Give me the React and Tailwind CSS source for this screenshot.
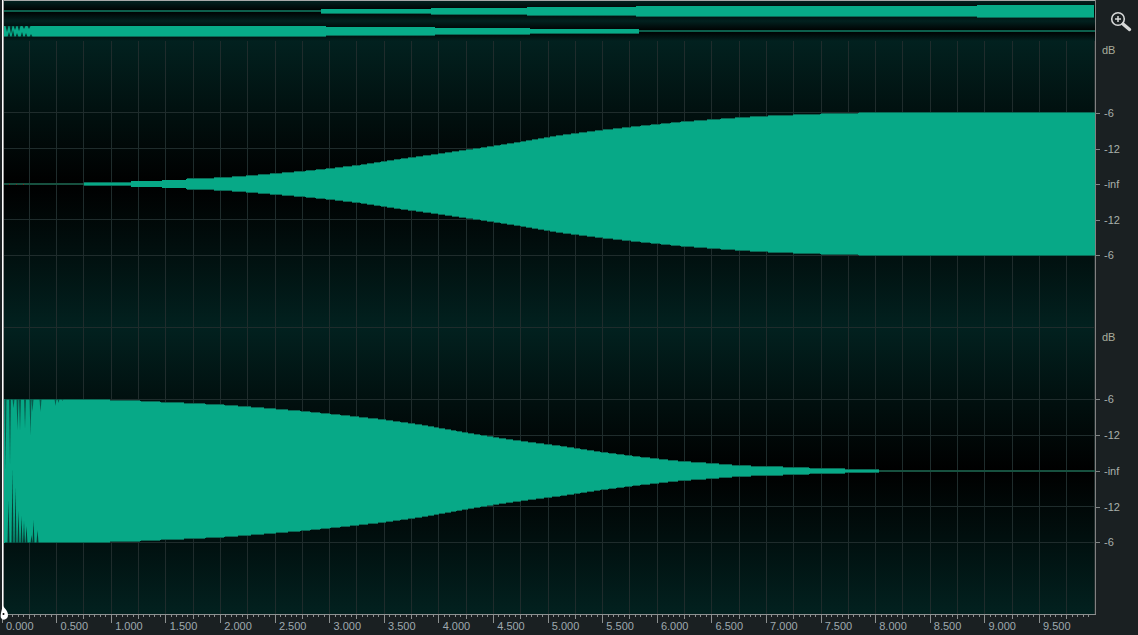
import React from "react";

const WAVE = "#07ab88";
const EDGE = "#0a6a56";
const GRID = "#1f2c2c";
const PLOT_W = 1091;

// envelope points are [screen x, half height in px]
const ENV_TOP = [
  [84, 1.5], [130, 1.5], [131, 3], [161, 3], [162, 4], [185, 4], [186, 5], [206, 5.6], [223, 6.5], [240, 7.5], [266, 9.7],
  [300, 12.5], [330, 15.5], [360, 19], [400, 25], [440, 30.3], [480, 36], [520, 42], [560, 48.7], [600, 53.7],
  [640, 58], [680, 62], [720, 65], [760, 67.7], [800, 69.3], [840, 70.7], [900, 71.7], [1094, 71.7],
];
const ENV_BOTTOM = [
  [4, 72], [80, 71.7], [130, 70.5], [160, 69], [190, 67.7], [220, 66.3], [260, 63.3], [300, 60], [340, 56], [380, 51.7],
  [420, 46.3], [460, 39.3], [500, 32.7], [530, 28.7], [560, 25], [600, 19], [640, 14], [680, 9.7], [710, 7.7],
  [740, 5.3], [775, 4.3], [800, 3.3], [830, 2.3], [878, 1.3],
];

// dark spikes in the start of the lower channel: [x, tip y]
const SPIKES_DOWN = [[5.5, 471], [10, 465], [13.5, 408], [17.5, 430], [20, 430], [25, 428], [30.5, 436], [32.5, 412], [40.5, 412], [55.5, 406], [58.5, 403], [62.5, 401]];
const SPIKES_UP = [[8.5, 500], [12.5, 468], [15.5, 487], [18.5, 510], [21.5, 516], [24, 521], [26.5, 526], [31.5, 535], [33.5, 520], [37.5, 530]];

// small jag at the start of the lower overview lane: [x, tip y]
const OVERVIEW_JAGS_TOP = [[7, 11], [11, 13], [15, 9], [19, 10], [24, 8], [29, 8]];
const OVERVIEW_JAGS_BOTTOM = [[9, 11], [13, 9], [17, 12], [22, 11], [26, 12], [31, 13]];

const DB_ROWS = ["-6", "-12", "-inf", "-12", "-6"];
const TIME_LABELS = Array.from({ length: 20 }, (_, i) => (i * 0.5).toFixed(3));

const halfAt = (env, x) => {
  if (x < env[0][0] || x > env[env.length - 1][0]) return 0;
  for (let i = 1; i < env.length; i++) {
    const [x0, h0] = env[i - 1];
    const [x1, h1] = env[i];
    if (x <= x1) return h0 + ((h1 - h0) * (x - x0)) / (x1 - x0);
  }
  return 0;
};

const wavePath = (env, center, pick) => {
  let d = "";
  for (let x = env[0][0]; x <= env[env.length - 1][0]; x++) {
    const h = pick(halfAt(env, x));
    if (h > 0) d += `M${x - 4} ${center - h}h1V${center + h}h-1Z`;
  }
  return d;
};

const GridLines = ({ height, rows }) => (
  <>
    {Array.from({ length: 40 }, (_, i) => {
      const x = Math.floor(2 + (i + 1) * 27.3) - 4;
      return <rect key={i} x={x} y={0} width={1} height={height} fill={GRID} />;
    })}
    {rows.map((y) => (
      <rect key={y} x={0} y={y} width={PLOT_W} height={1} fill={GRID} />
    ))}
  </>
);

const Channel = ({ height, center, env, rows, lineFrom, lineTo, children }) => (
  <div className="bg-[linear-gradient(to_bottom,#02211f_0%,#010f0e_27%,#000000_50%,#010f0e_73%,#02211f_100%)]" style={{ height }}>
    <svg width={PLOT_W} height={height} shapeRendering="crispEdges" className="block">
      <GridLines height={height} rows={rows} />
      <rect x={lineFrom - 4} y={center - 1} width={lineTo - lineFrom} height={2} fill="#17503f" />
      <path d={wavePath(env, center, Math.ceil)} fill={EDGE} />
      <path d={wavePath(env, center, Math.floor)} fill={WAVE} fillOpacity={0.97} />
      {children}
    </svg>
  </div>
);

const OverviewChannel = ({ bars, line, children }) => (
  <div className="h-[20px] bg-[linear-gradient(to_bottom,#02211f_0%,#000000_50%,#02211f_100%)]">
    <svg width={PLOT_W} height={20} className="block" shapeRendering="crispEdges">
      <rect x={line[0] - 4} y={9} width={line[1] - line[0]} height={2} fill="#0d5f4c" />
      {bars.map(([x0, x1, h]) => (
        <g key={x0}>
          <rect x={x0 - 4} y={10 - h} width={x1 - x0} height={h * 2 + 1} fill={EDGE} />
          <rect x={x0 - 4} y={10 - h} width={x1 - x0} height={h * 2} fill={WAVE} />
        </g>
      ))}
      {children}
    </svg>
  </div>
);

const Scale = ({ height, labelTop, gaps }) => (
  <div className="flex flex-col" style={{ height }}>
    <div className="h-[14px] pl-[6px] leading-[14px] text-[#a9ad9c]" style={{ marginTop: labelTop, marginBottom: 51 - labelTop }}>dB</div>
    {DB_ROWS.map((label, i) => (
      <div key={i} className="flex items-center h-[14px]" style={{ marginTop: gaps[i] }}>
        <div className="w-[4px] h-px bg-[#808585]" />
        <span className="ml-[4px] text-[#a9b0ac]">{label}</span>
      </div>
    ))}
  </div>
);

const Ruler = () => {
  const ticks = Array.from({ length: 200 }, (_, i) => i);
  return (
    <svg width={1096} height={10} className="absolute left-0 top-0" shapeRendering="crispEdges">
      <rect x={4} y={0} width={1092} height={1} fill="#8c9090" />
      {ticks.map((i) => {
        const x = Math.floor(2 + i * 5.46);
        const size = i % 10 === 0 ? 9 : i % 5 === 0 ? 5 : 3;
        if (x > 1095) return null;
        return <rect key={i} x={x} y={0} width={1} height={size} fill="#8c9090" />;
      })}
    </svg>
  );
};

const App = () => {
  return (
    <div className="relative w-[1138px] h-[635px] overflow-hidden flex flex-col bg-[#1a2022] font-['Liberation_Sans',sans-serif] text-[11px]">
      <div className="flex h-[614px]">
        {/* playhead strip */}
        <div className="w-[4px] flex justify-start pl-[2px]">
          <div className="w-px bg-white" />
          <div className="w-px bg-[#9a9a9a]" />
        </div>

        <div className="w-[1091px] border-t border-[#a8a8a8]">
          <OverviewChannel
            line={[4, 321]}
            bars={[[321, 431, 2], [431, 527, 3], [527, 636, 4], [636, 977, 5], [977, 1094, 6]]}
          />
          <OverviewChannel
            line={[639, 1095]}
            bars={[[4, 33, 5], [33, 326, 5], [326, 435, 4], [435, 530, 3], [530, 639, 2]]}
          >
            <g shapeRendering="auto">
              {OVERVIEW_JAGS_TOP.map(([x, tip]) => (
                <polygon key={x} points={`${x - 5.5},5 ${x - 2.5},5 ${x - 4},${tip}`} fill="#04332c" />
              ))}
              {OVERVIEW_JAGS_BOTTOM.map(([x, tip]) => (
                <polygon key={x} points={`${x - 5.5},16 ${x - 2.5},16 ${x - 4},${tip}`} fill="#04332c" />
              ))}
            </g>
          </OverviewChannel>
          <Channel height={286} center={143} env={ENV_TOP} rows={[71, 107, 178, 214]} lineFrom={4} lineTo={84}>
            <rect x={5} y={143} width={1} height={1} fill="#7a2a20" />
            <rect x={12} y={143} width={1} height={1} fill="#7a2a20" />
            <rect x={19} y={143} width={1} height={1} fill="#7a2a20" />
          </Channel>
          <Channel height={287} center={144} env={ENV_BOTTOM} rows={[0, 72, 108, 144, 179, 215]} lineFrom={878} lineTo={1095}>
            <g shapeRendering="auto">
              {SPIKES_DOWN.map(([x, tip]) => (
                <polygon key={x} points={`${x - 5},72 ${x - 3},72 ${x - 4},${tip - 327}`} fill="#0a5a4c" />
              ))}
              {SPIKES_UP.map(([x, tip]) => (
                <polygon key={x} points={`${x - 5},216 ${x - 3},216 ${x - 4},${tip - 327}`} fill="#073d35" />
              ))}
            </g>
          </Channel>
        </div>

        {/* dB scale panel */}
        <div className="w-[43px] border-l border-[#808080]">
          <div className="h-[41px] flex items-start pl-[14px] pt-[11px]">
            <svg width={22} height={22} viewBox="0 0 22 22" fill="none">
              <circle cx="8" cy="8" r="6.3" stroke="#d6d8d8" strokeWidth="1.6" />
              <path d="M5 8h6M8 5v6" stroke="#d6d8d8" strokeWidth="1.5" />
              <path d="M13 13l6.5 5.5" stroke="#d6d8d8" strokeWidth="3.4" strokeLinecap="round" />
            </svg>
          </div>
          <Scale height={286} labelTop={2} gaps={[0, 22, 21, 22, 21]} />
          <Scale height={287} labelTop={3} gaps={[0, 22, 22, 22, 21]} />
        </div>
      </div>

      {/* time ruler */}
      <div className="relative h-[21px]">
        <Ruler />
        <div className="flex pl-[6px] pt-[6px] leading-[13px] text-[#9fa9ae]">
          {TIME_LABELS.map((t) => (
            <div key={t} className="w-[54.58px] shrink-0">{t}</div>
          ))}
        </div>
      </div>

      {/* playhead handle */}
      <svg width={9} height={16} viewBox="0 0 9 16" className="absolute left-0 top-[605px]">
        <path d="M3 0.5C3.5 3 8 5 8 10a4 4.8 0 0 1-7 3C0 10 2 4 3 0.5Z" fill="#ffffff" />
        <circle cx="3.5" cy="9" r="1" fill="#000000" />
      </svg>
    </div>
  );
};

export default App;
